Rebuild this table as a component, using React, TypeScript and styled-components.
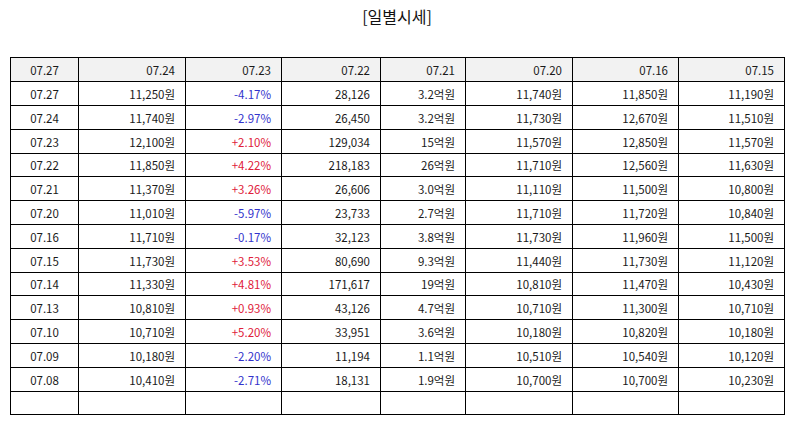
import React from 'react'
import styled, { createGlobalStyle } from 'styled-components'

const GlobalStyle = createGlobalStyle`
  body {
    margin: 0;
    background: #ffffff;
    font-family: "Noto Sans CJK KR", "Noto Sans", sans-serif;
  }
`

const Page = styled.div`
  padding: 0 10px;
`

const Title = styled.h2`
  margin: 0;
  height: 57px;
  padding-top: 4px;
  box-sizing: border-box;
  text-align: center;
  font-size: 16px;
  font-weight: 400;
  color: #111;
`

const Table = styled.table`
  width: 774px;
  border-collapse: collapse;
  table-layout: fixed;
  font-size: 11.5px;
  color: #1a1a1a;
`

const Row = styled.tr`
  height: 24px;

  &:nth-child(5n) {
    height: 23px;
  }
`

const Cell = styled.td<{ $head?: boolean; $center?: boolean; $tone?: 'up' | 'down' }>`
  border: 1px solid #000;
  padding: ${p => (p.$center ? '0' : '0 10px 0 4px')};
  line-height: 14px;
  text-align: ${p => (p.$center ? 'center' : 'right')};
  background: ${p => (p.$head ? '#f2f2f2' : '#fff')};
  color: ${p => (p.$tone === 'up' ? '#e0203a' : p.$tone === 'down' ? '#3333cc' : '#1a1a1a')};
`

const widths = [68, 107, 96, 99, 85, 107, 106, 106]
const head = ['07.27', '07.24', '07.23', '07.22', '07.21', '07.20', '07.16', '07.15']

const rows = [
  ['07.27', '11,250원', '-4.17%', '28,126', '3.2억원', '11,740원', '11,850원', '11,190원'],
  ['07.24', '11,740원', '-2.97%', '26,450', '3.2억원', '11,730원', '12,670원', '11,510원'],
  ['07.23', '12,100원', '+2.10%', '129,034', '15억원', '11,570원', '12,850원', '11,570원'],
  ['07.22', '11,850원', '+4.22%', '218,183', '26억원', '11,710원', '12,560원', '11,630원'],
  ['07.21', '11,370원', '+3.26%', '26,606', '3.0억원', '11,110원', '11,500원', '10,800원'],
  ['07.20', '11,010원', '-5.97%', '23,733', '2.7억원', '11,710원', '11,720원', '10,840원'],
  ['07.16', '11,710원', '-0.17%', '32,123', '3.8억원', '11,730원', '11,960원', '11,500원'],
  ['07.15', '11,730원', '+3.53%', '80,690', '9.3억원', '11,440원', '11,730원', '11,120원'],
  ['07.14', '11,330원', '+4.81%', '171,617', '19억원', '10,810원', '11,470원', '10,430원'],
  ['07.13', '10,810원', '+0.93%', '43,126', '4.7억원', '10,710원', '11,300원', '10,710원'],
  ['07.10', '10,710원', '+5.20%', '33,951', '3.6억원', '10,180원', '10,820원', '10,180원'],
  ['07.09', '10,180원', '-2.20%', '11,194', '1.1억원', '10,510원', '10,540원', '10,120원'],
  ['07.08', '10,410원', '-2.71%', '18,131', '1.9억원', '10,700원', '10,700원', '10,230원'],
]

const toneOf = (v: string) => (v.startsWith('+') ? 'up' : v.startsWith('-') ? 'down' : undefined)

const App: React.FC = () => {
  return (
    <Page>
      <GlobalStyle />
      <Title>[일별시세]</Title>
      <Table>
        <colgroup>
          {widths.map((w, i) => (
            <col key={i} style={{ width: w }} />
          ))}
        </colgroup>
        <tbody>
          <Row>
            {head.map((h, i) => (
              <Cell key={i} $head $center={i === 0}>{h}</Cell>
            ))}
          </Row>
          {rows.map((r, ri) => (
            <Row key={ri}>
              {r.map((v, ci) => (
                <Cell key={ci} $center={ci === 0} $tone={ci === 2 ? toneOf(v) : undefined}>
                  {v}
                </Cell>
              ))}
            </Row>
          ))}
          <Row>
            {widths.map((_, i) => (
              <Cell key={i} />
            ))}
          </Row>
        </tbody>
      </Table>
    </Page>
  )
}

export default App
